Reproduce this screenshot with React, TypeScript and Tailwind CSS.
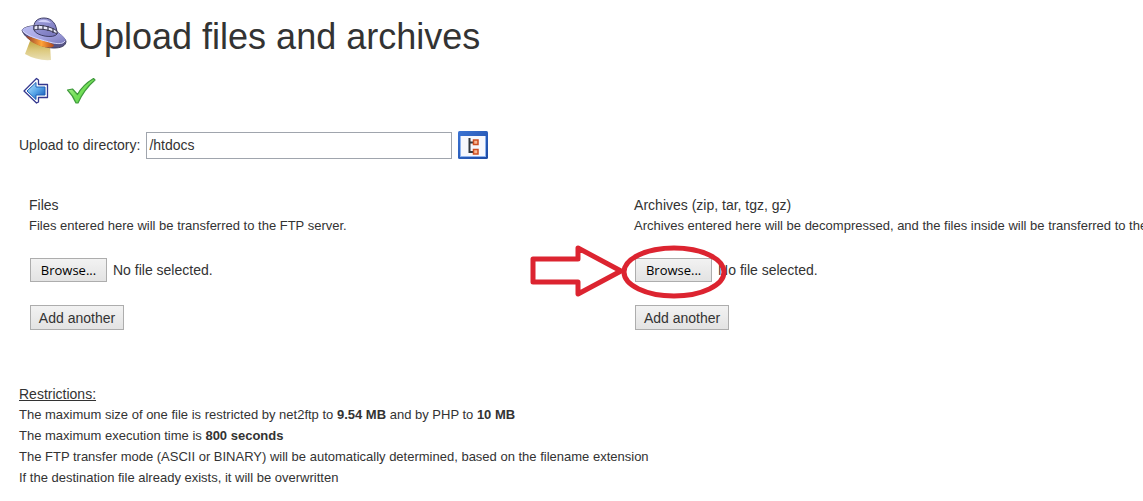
/**
 * Upload page of the web FTP client.
 *
 * Two upload columns (plain files, archives) with the server
 * restrictions listed below them.
 */

import { useRef, useState } from "react";
import type { ReactNode } from "react";

interface UploadColumnProps {
  id: string;
  title: string;
  description: string;
  accept?: string;
  highlight?: ReactNode;
}

function UfoLogo() {
  return (
    <svg aria-hidden="true" width="48" height="48" viewBox="0 0 48 48">
      <defs>
        <linearGradient id="ufo-beam" x1="0" y1="0" x2="0" y2="1">
          <stop offset="0" stopColor="#c2a640" />
          <stop offset="0.5" stopColor="#ddca80" />
          <stop offset="1" stopColor="#e9dfb4" />
        </linearGradient>
        <linearGradient id="ufo-hull" x1="0" y1="0" x2="1" y2="1">
          <stop offset="0" stopColor="#b9bbf0" />
          <stop offset="0.5" stopColor="#a9a9e6" />
          <stop offset="1" stopColor="#7a79ba" />
        </linearGradient>
        <linearGradient id="ufo-dome" x1="0" y1="0" x2="1" y2="1">
          <stop offset="0" stopColor="#a2a3de" />
          <stop offset="1" stopColor="#7573ba" />
        </linearGradient>
        <linearGradient id="ufo-glow" x1="0" y1="0" x2="1" y2="0">
          <stop offset="0" stopColor="#8d3a2c" />
          <stop offset="0.55" stopColor="#ffa438" />
          <stop offset="1" stopColor="#b2481f" />
        </linearGradient>
      </defs>
      <path d="M10 28 L5 41 Q17 48 31 47 L30 33 Z" fill="url(#ufo-beam)" />
      <path
        d="M2 17 C4 14 12 12 20 13 C30 14 42 20 46 28 C46 33 41 35 34 35 C22 35 4 26 2 17 Z"
        fill="#565486"
        stroke="#42405f"
        strokeWidth="1"
      />
      <path
        d="M6 23 C12 24 27 27 34 32 C34 35 28 35 24 34 C16 32 9 28 6 23 Z"
        fill="url(#ufo-glow)"
      />
      <path
        d="M2 17 C4 14 12 12 20 13 C30 14 42 20 46 27 C44 31 39 31 33 30 C21 27 5 24 2 17 Z"
        fill="url(#ufo-hull)"
      />
      <path
        d="M3 18 C8 24 22 27 33 30 C39 31 43 31 45 28"
        fill="none"
        stroke="#d8d8fb"
        strokeWidth="1"
      />
      <path
        d="M14 17 C13 9 17 5 24 5 C32 5 37 11 37 21 C34 26 16 23 14 17 Z"
        fill="url(#ufo-dome)"
        stroke="#3f3e66"
        strokeWidth="1"
      />
      <path d="M18 9 C21 6 27 6 31 10 C27 9 22 9 18 9 Z" fill="#d0d0f8" />
      <path
        d="M14 13 C20 11 32 14 37 18 L37 21 C31 17 21 15 14 17 Z"
        fill="#e9e9f8"
        stroke="#3a3950"
        strokeWidth="1"
      />
      <path d="M18 12 V16 M23 12 V17 M28 13 V18 M33 15 V20" stroke="#3a3950" strokeWidth="1.2" />
    </svg>
  );
}

function BackIcon() {
  return (
    <svg aria-hidden="true" width="28" height="28" viewBox="0 0 28 28">
      <defs>
        <linearGradient id="back-fill" x1="0" y1="0" x2="1" y2="1">
          <stop offset="0" stopColor="#c8eaff" />
          <stop offset="0.5" stopColor="#5aa9ea" />
          <stop offset="1" stopColor="#0d4daf" />
        </linearGradient>
      </defs>
      <path
        d="M2 14 L14.5 1.5 L16.5 3 V7.500 H25.500 V20.500 H16.500 V25 L14.500 26 Z"
        fill="#ffffff"
        stroke="#34388f"
        strokeWidth="1.3"
        strokeLinejoin="round"
      />
      <path
        d="M5 14 L14 5.500 V10 H23 V18 H14 V22.500 Z"
        fill="url(#back-fill)"
        stroke="#1d61b8"
        strokeWidth="1"
      />
    </svg>
  );
}

function CheckIcon() {
  return (
    <svg aria-hidden="true" width="30" height="28" viewBox="0 0 30 28">
      <defs>
        <linearGradient id="check-fill" x1="0" y1="0" x2="1" y2="1">
          <stop offset="0" stopColor="#c0f4a4" />
          <stop offset="0.5" stopColor="#74e058" />
          <stop offset="1" stopColor="#5bcf48" />
        </linearGradient>
      </defs>
      <path
        d="M1.500 13 L6.500 12 L11.500 17.500 C15 11 20 6 27.500 1.500 L29 3 C22 9 16 17 12 26 L10 26 C8 21 5 16.500 1.500 13 Z"
        fill="url(#check-fill)"
        stroke="#3f9a3c"
        strokeWidth="1.2"
        strokeLinejoin="round"
      />
    </svg>
  );
}

function TreeIcon() {
  return (
    <svg aria-hidden="true" width="30" height="28" viewBox="0 0 30 28">
      <defs>
        <linearGradient id="tree-frame" x1="0" y1="0" x2="1" y2="1">
          <stop offset="0" stopColor="#3c74d4" />
          <stop offset="1" stopColor="#1c4aa4" />
        </linearGradient>
      </defs>
      <rect width="30" height="28" rx="1.500" fill="url(#tree-frame)" />
      <rect x="2" y="5" width="26" height="21" fill="#8fb4f0" />
      <rect x="3" y="5" width="24" height="20" fill="#f7f8fd" />
      <path d="M11.500 7 V21 H16 M11.500 11.500 H16" fill="none" stroke="#33383f" strokeWidth="2" />
      <rect x="15.500" y="9" width="4.500" height="4.500" fill="#f8b896" stroke="#cc4e20" strokeWidth="1.500" />
      <rect x="15.500" y="18.500" width="4.500" height="4.500" fill="#f8b896" stroke="#cc4e20" strokeWidth="1.500" />
    </svg>
  );
}

// Arrow and ring drawn over the archive Browse button.
function BrowseCallout() {
  return (
    <svg
      aria-hidden="true"
      className="pointer-events-none absolute -top-4 -left-[106px]"
      width="200"
      height="58"
      viewBox="0 0 200 58"
      fill="none"
      stroke="#dc2430"
      strokeWidth="5"
    >
      <path d="M4 17 H49 V6 L92 29 L49 52 V40 H4 Z" strokeLinejoin="round" />
      <ellipse cx="145" cy="30" rx="50" ry="24" />
    </svg>
  );
}

function UploadColumn({ id, title, description, accept, highlight }: UploadColumnProps) {
  const [files, setFiles] = useState([""]);
  const inputs = useRef<Array<HTMLInputElement | null>>([]);

  function handleSelect(index: number, name: string) {
    setFiles((current) => current.map((file, i) => (i === index ? name : file)));
  }

  return (
    <section aria-labelledby={`${id}-title`} className="pl-[29px] whitespace-nowrap">
      <h2 id={`${id}-title`} className="text-sm leading-5">
        {title}
      </h2>
      <p className="text-[13px] leading-[21px]">{description}</p>

      <div className="mt-[22px] grid gap-2 pl-px">
        {files.map((file, index) => (
          <div key={index} className="relative flex items-center gap-1.5">
            <button
              type="button"
              onClick={() => inputs.current[index]?.click()}
              className="h-6 w-[77px] border border-[#adadad] bg-linear-to-b from-[#f2f2f2] to-[#e3e3e3] font-['Open_Sans',sans-serif] text-[13px] leading-5 text-black"
            >
              Browse...
            </button>
            <label htmlFor={`${id}-${index}`} className="text-sm leading-6">
              {file || "No file selected."}
            </label>
            <input
              ref={(element) => {
                inputs.current[index] = element;
              }}
              id={`${id}-${index}`}
              type="file"
              accept={accept}
              className="hidden"
              onChange={(event) => handleSelect(index, event.target.files?.[0]?.name ?? "")}
            />
            {index === 0 ? highlight : null}
          </div>
        ))}
      </div>

      <button
        type="button"
        onClick={() => setFiles((current) => [...current, ""])}
        className="mt-[23px] ml-px h-[25px] w-[94px] border border-[#adadad] bg-linear-to-b from-[#f2f2f2] to-[#e3e3e3] text-sm leading-5"
      >
        Add another
      </button>
    </section>
  );
}

export default function App() {
  const [directory, setDirectory] = useState("/htdocs");

  return (
    <main className="overflow-x-hidden bg-white pt-[13px] pb-3 font-['Liberation_Sans',Arial,sans-serif] text-[#333333]">
      <header className="flex items-center gap-2.5 pl-5">
        <UfoLogo />
        <h1 className="text-4xl leading-12">Upload files and archives</h1>
      </header>

      <nav aria-label="Actions" className="mt-4 flex gap-4 pl-[22px]">
        <button type="button" aria-label="Back">
          <BackIcon />
        </button>
        <button type="button" aria-label="Upload">
          <CheckIcon />
        </button>
      </nav>

      <div className="mt-[26px] flex items-center pl-[19px]">
        <label htmlFor="directory" className="text-sm leading-5">
          Upload to directory:
        </label>
        <input
          id="directory"
          type="text"
          value={directory}
          onChange={(event) => setDirectory(event.target.value)}
          className="ml-1.5 h-[27px] w-[306px] border border-[#a0a5ad] bg-white px-0.5 text-sm leading-5"
        />
        <button type="button" aria-label="Choose a directory" className="ml-1.5">
          <TreeIcon />
        </button>
      </div>

      <div className="mt-9 grid grid-cols-[minmax(0,9fr)_minmax(0,8fr)]">
        <UploadColumn
          id="files"
          title="Files"
          description="Files entered here will be transferred to the FTP server."
        />
        <UploadColumn
          id="archives"
          title="Archives (zip, tar, tgz, gz)"
          description="Archives entered here will be decompressed, and the files inside will be transferred to the FTP server."
          accept=".zip,.tar,.tgz,.gz"
          highlight={<BrowseCallout />}
        />
      </div>

      <section aria-labelledby="restrictions-title" className="mt-[54px] pl-[19px]">
        <h2 id="restrictions-title" className="text-sm leading-5 underline">
          Restrictions:
        </h2>
        <ul className="text-[13px] leading-[21px]">
          <li>
            The maximum size of one file is restricted by net2ftp to <b>9.54 MB</b> and by PHP
            to <b>10 MB</b>
          </li>
          <li>
            The maximum execution time is <b>800 seconds</b>
          </li>
          <li>
            The FTP transfer mode (ASCII or BINARY) will be automatically determined, based on
            the filename extension
          </li>
          <li>If the destination file already exists, it will be overwritten</li>
        </ul>
      </section>
    </main>
  );
}
